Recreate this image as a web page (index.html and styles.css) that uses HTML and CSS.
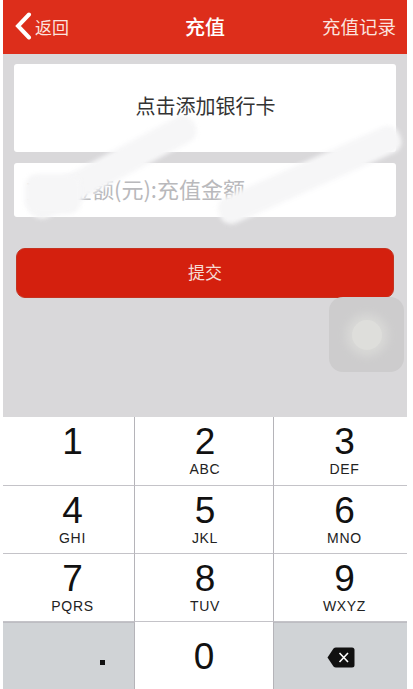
FILE: index.html
```html
<!DOCTYPE html>
<html lang="zh">
<head>
<meta charset="utf-8">
<title>充值</title>
<link rel="stylesheet" href="styles.css">
</head>
<body>
<div class="phone">
  <header class="bar">
    <div class="back">
      <svg class="chev" viewBox="0 0 18 28" aria-hidden="true"><path d="M15 2.5 L4 14 L15 25.5" fill="none" stroke="#fff" stroke-width="4" stroke-linecap="round"/></svg>
      <span>返回</span>
    </div>
    <div class="title">充值</div>
    <div class="record">充值记录</div>
  </header>
  <main class="form">
    <div class="card add">点击添加银行卡</div>
    <div class="card amount">充值金额(元):充值金额</div>
    <button class="submit">提交</button>
  </main>
  <div class="keys">
    <div class="key"><b>1</b><i></i></div>
    <div class="key"><b>2</b><i>ABC</i></div>
    <div class="key"><b>3</b><i>DEF</i></div>
    <div class="key"><b>4</b><i>GHI</i></div>
    <div class="key"><b>5</b><i>JKL</i></div>
    <div class="key"><b>6</b><i>MNO</i></div>
    <div class="key"><b>7</b><i>PQRS</i></div>
    <div class="key"><b>8</b><i>TUV</i></div>
    <div class="key"><b>9</b><i>WXYZ</i></div>
    <div class="key dark dot"><span></span></div>
    <div class="key zero"><b>0</b></div>
    <div class="key dark del">
      <svg viewBox="0 0 28 21" width="28" height="21" aria-hidden="true"><path d="M9 0.5 H25 Q27.5 0.5 27.5 3 V18 Q27.5 20.5 25 20.5 H9 Q7.5 20.5 6.5 19.5 L0.5 10.5 L6.5 1.5 Q7.5 0.5 9 0.5 Z" fill="#111"/><path d="M12.5 6 L21 15 M21 6 L12.5 15" stroke="#fff" stroke-width="1.6"/></svg>
    </div>
  </div>
  <div class="assist"><div class="assist-dot"></div></div>
  <div class="smear s1"></div>
  <div class="smear s2"></div>
  <div class="smear s3"></div>
</div>
</body>
</html>
```
FILE: styles.css
```css
* { box-sizing: border-box; }
html, body { margin: 0; padding: 0; background: #fff; }
body { width: 413px; height: 689px; overflow: hidden; font-family: "Noto Sans CJK SC", "Liberation Sans", sans-serif; }
.phone { position: relative; margin-left: 3px; width: 404px; height: 689px; background: #d9d8da; overflow: hidden; }
.bar { height: 54px; background: #dd2e1b; color: #fff; display: grid; grid-template-columns: 1fr auto 1fr; align-items: center; padding: 0 11px 2px 11px; }
.back { display: flex; align-items: center; gap: 3px; font-size: 17px; color: #fbe3df; }
.chev { width: 18px; height: 28px; }
.title { font-size: 20px; font-weight: 500; }
.record { justify-self: end; font-size: 18.5px; color: #fbe3df; }
.form { height: 363px; padding: 10px 11px 0; display: flex; flex-direction: column; }
.card { background: #fff; border-radius: 3px; display: flex; align-items: center; }
.add { height: 88px; justify-content: center; font-size: 20px; color: #333; padding: 0 0 5px 1px; }
.amount { height: 54px; margin-top: 11px; padding: 0 0 5px 12px; font-size: 22px; color: #b9b9bc; }
.submit { margin: 31px 2px 0; height: 50px; border: 1px solid #c43320; border-radius: 9px; background: #d4200e; color: #f6dcd6; font: inherit; font-size: 17px; padding-bottom: 4px; }
.keys { display: grid; grid-template-columns: 132px 139px 133px; grid-template-rows: 69px 68px 68px 67px; height: 272px; background: #fff; }
.key { display: flex; flex-direction: column; align-items: center; border-bottom: 1.5px solid #c4c3c8; border-right: 1px solid #b5b4b9; background: #fff; font-family: "Liberation Sans", sans-serif; color: #111; padding: 5px 0 0 8px; }
.key:nth-child(3n+2) { padding-left: 2px; }
.key:nth-child(3n) { border-right: 0; }
.key:nth-child(n+10) { border-bottom: 0; }
.key b { font-weight: 400; font-size: 37px; line-height: 39px; }
.key i { font-style: normal; font-size: 14px; line-height: 16px; letter-spacing: 0.7px; color: #222; }
.dark { background: #d0d3d6; border-top: 1px solid #bdbdc2; }
.dot { position: relative; }
.dot span { position: absolute; left: 97px; top: 37px; width: 5px; height: 5px; background: #111; }
.key.zero { padding: 15px 0 0; }
.key.del { justify-content: center; padding: 3px 0 0; }
.assist { position: absolute; left: 326px; top: 297px; width: 75px; height: 75px; border-radius: 14px; background: #cdcccd; display: flex; align-items: center; justify-content: center; }
.assist-dot { width: 30px; height: 30px; border-radius: 50%; background: #dededb; box-shadow: 0 0 10px 6px #d9d9d7; }
.smear { position: absolute; background: #f6f6f7; filter: blur(2px); border-radius: 12px; }
.s1 { left: 17px; top: 153px; width: 185px; height: 28px; transform: rotate(-28deg); }
.s2 { left: 208px; top: 161px; width: 197px; height: 28px; transform: rotate(-24deg); }
.s3 { left: 22px; top: 174px; width: 56px; height: 40px; }
```
